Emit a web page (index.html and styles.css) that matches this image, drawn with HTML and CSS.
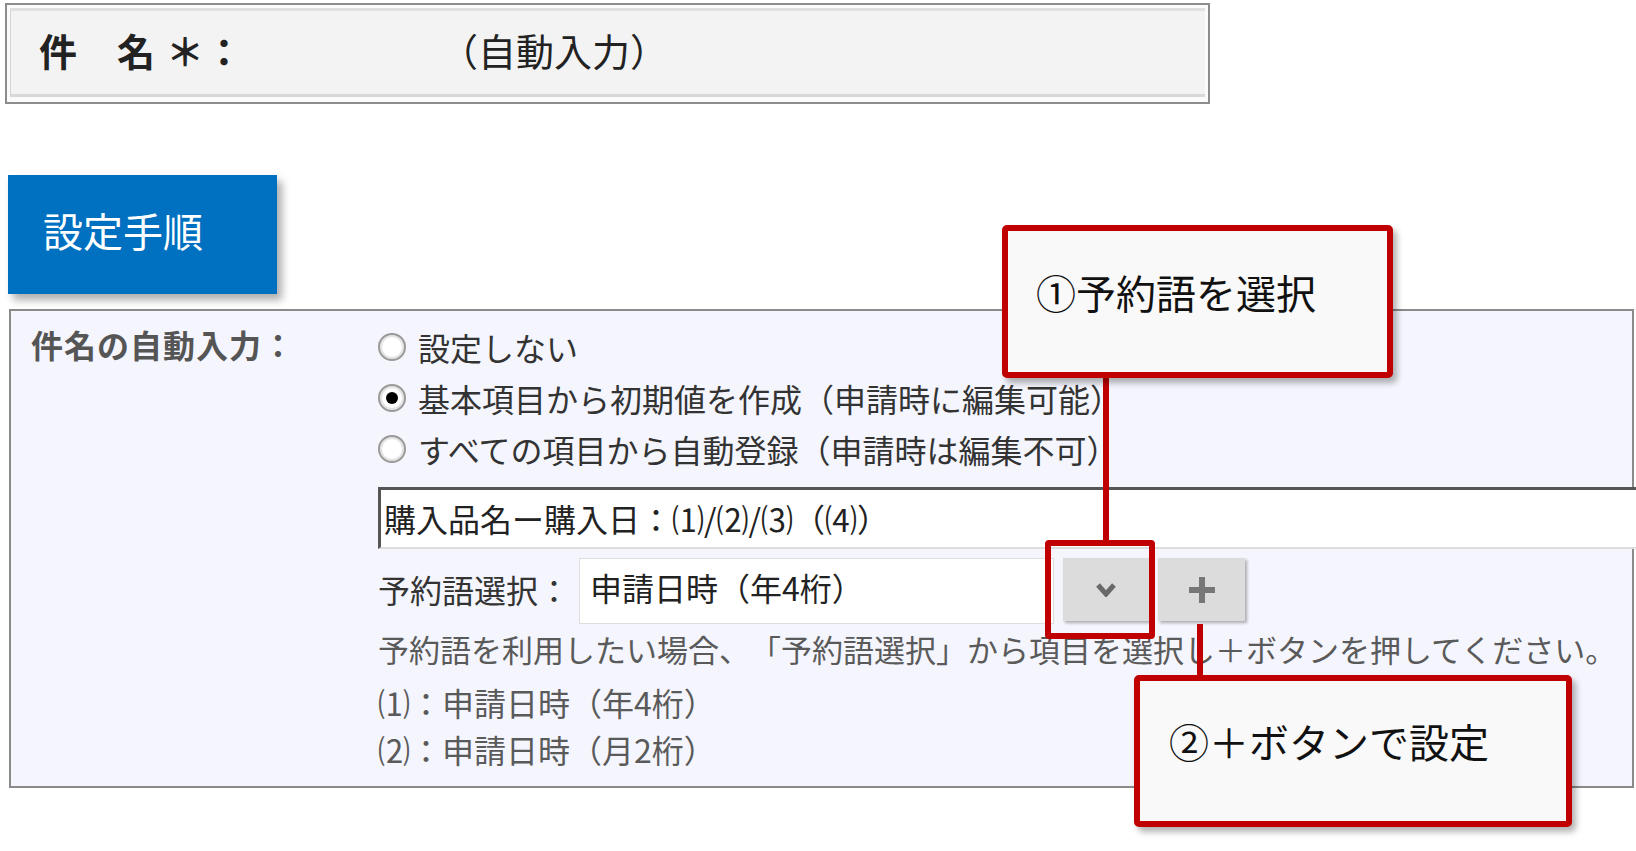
FILE: index.html
```html
<!DOCTYPE html>
<html lang="ja">
<head>
<meta charset="UTF-8">
<title>件名の自動入力 設定手順</title>
<link rel="stylesheet" href="styles.css">
</head>
<body>
<div class="sheet">

	<!-- 完成イメージ -->
	<div class="title-box">
		<div class="title-inner">
			<span class="title-label">件　名<span class="title-req">＊：</span></span>
			<span class="title-value">（自動入力）</span>
		</div>
	</div>

	<div class="step-tag">設定手順</div>

	<div class="panel">
		<div class="panel-label">件名の自動入力：</div>
		<div class="panel-body">
			<div class="radio-row"><span class="radio"></span>設定しない</div>
			<div class="radio-row"><span class="radio checked"></span>基本項目から初期値を作成（申請時に編集可能）</div>
			<div class="radio-row"><span class="radio"></span>すべての項目から自動登録（申請時は編集不可）</div>

			<div class="subject-input">購入品名ー購入日：⑴/⑵/⑶（⑷）</div>

			<div class="reserve-row">
				<span class="reserve-label">予約語選択：</span>
				<div class="reserve-select">申請日時（年4桁）</div>
				<button class="tool-btn">
					<svg width="20" height="14" viewBox="0 0 20 14"><path d="M2 2 L10 11 L18 2" fill="none" stroke="#6a6a6a" stroke-width="5"/></svg>
				</button>
				<button class="tool-btn plus">
					<svg width="26" height="26" viewBox="0 0 26 26"><rect x="0" y="10" width="26" height="6" fill="#777"/><rect x="10" y="0" width="6" height="26" fill="#777"/></svg>
				</button>
			</div>

			<p class="help">予約語を利用したい場合、「予約語選択」から項目を選択し＋ボタンを押してください。</p>
			<p class="note">⑴：申請日時（年4桁）</p>
			<p class="note">⑵：申請日時（月2桁）</p>
		</div>
	</div>

	<!-- 注釈 -->
	<div class="mark-box"></div>
	<div class="lead lead-1"></div>
	<div class="lead lead-2"></div>
	<div class="callout callout-1">①予約語を選択</div>
	<div class="callout callout-2">②＋ボタンで設定</div>

</div>
</body>
</html>
```

FILE: styles.css
```css
* {
	margin: 0;
	padding: 0;
	box-sizing: border-box;
}

body {
	background: #fff;
	font-family: "Noto Sans CJK JP", "Noto Sans", sans-serif;
	color: #222;
}

.sheet {
	position: relative;
	width: 1636px;
	height: 851px;
	overflow: hidden;
	padding-top: 3px;
}

/* 件名ボックス */
.title-box {
	margin-left: 5px;
	width: 1205px;
	height: 101px;
	border: 2px solid #8c8c8c;
	background: #fbfbfb;
	padding: 3px 3px 5px 3px;
}

.title-inner {
	height: 100%;
	display: flex;
	align-items: center;
	padding-left: 28px;
	padding-bottom: 6px;
	background: #f3f3f3;
	border-top: 3px solid #e0e0e0;
	border-bottom: 3px solid #d8d8d8;
	border-left: 1px solid #d4d4d4;
	font-size: 38px;
	line-height: 1;
}

.title-label {
	font-weight: bold;
	letter-spacing: 1px;
	width: 400px;
}

.title-req {
	margin-left: 10px;
}

.title-value {
	font-size: 38px;
	margin-left: 1px;
}

/* 見出し */
.step-tag {
	margin: 71px 0 0 8px;
	width: 269px;
	height: 119px;
	padding: 0 0 10px 35px;
	display: flex;
	align-items: center;
	background: #0070c0;
	color: #fff;
	font-size: 40px;
	box-shadow: 5px 6px 8px rgba(0, 0, 0, 0.32);
}

/* 設定パネル */
.panel {
	margin: 15px 0 0 9px;
	width: 1625px;
	height: 479px;
	border: 2px solid #8a8a8a;
	background: #f4f5fd;
	padding: 10px 0 0 20px;
	display: grid;
	grid-template-columns: 347px 1fr;
}

.panel-label {
	font-size: 32px;
	line-height: 46px;
	font-weight: bold;
	letter-spacing: 1px;
	color: #555;
}

.panel-body {
	font-size: 32px;
	color: #333;
}

.radio-row {
	height: 51px;
	display: flex;
	align-items: center;
	gap: 12px;
	white-space: nowrap;
}

.radio {
	position: relative;
	width: 28px;
	height: 28px;
	border-radius: 50%;
	border: 2px solid #9a9a9a;
	background: #fff;
	box-shadow: inset 0 0 0 2px #e4e4e4;
	flex: none;
}

.radio.checked::after {
	content: "";
	position: absolute;
	left: 6px;
	top: 6px;
	width: 12px;
	height: 12px;
	border-radius: 50%;
	background: #000;
}

.subject-input {
	margin-top: 13px;
	width: calc(100% + 4px);
	height: 62px;
	display: flex;
	align-items: center;
	padding-left: 3px;
	padding-bottom: 2px;
	background: #fff;
	border-top: 3px solid #555;
	border-left: 3px solid #555;
	border-bottom: 2px solid #ddd;
	color: #222;
	white-space: nowrap;
}

.reserve-row {
	margin-top: 9px;
	height: 66px;
	display: flex;
	align-items: flex-start;
}

.reserve-label {
	align-self: center;
	margin-right: 9px;
	margin-bottom: 4px;
	white-space: nowrap;
}

.reserve-select {
	width: 475px;
	height: 66px;
	display: flex;
	align-items: center;
	padding-left: 10px;
	padding-bottom: 8px;
	background: #fff;
	border: 1px solid #dedede;
	color: #222;
}

.tool-btn {
	margin-left: 9px;
	width: 86px;
	height: 63px;
	border: none;
	background: #dcdcdc;
	box-shadow: 2px 2px 3px rgba(0, 0, 0, 0.3);
	display: flex;
	align-items: center;
	justify-content: center;
}

.tool-btn.plus {
	width: 87px;
}

.help {
	margin-top: 1px;
	font-size: 31px;
	line-height: 48px;
	color: #5a5a5a;
	white-space: nowrap;
	text-spacing-trim: space-all;
}

.note {
	margin-top: 6px;
	line-height: 47px;
	color: #5a5a5a;
}

.note + .note {
	margin-top: 0;
}

/* 注釈 */
.mark-box {
	position: absolute;
	left: 1045px;
	top: 540px;
	width: 110px;
	height: 99px;
	border: 6px solid #c00000;
	border-radius: 4px;
}

.lead {
	position: absolute;
	width: 6px;
	background: #c00000;
}

.lead-1 {
	left: 1103px;
	top: 375px;
	height: 166px;
}

.lead-2 {
	left: 1197px;
	top: 624px;
	height: 53px;
}

.callout {
	position: absolute;
	border: 6px solid #c00000;
	border-radius: 5px;
	background: #f9f9f9;
	box-shadow: 4px 5px 6px rgba(0, 0, 0, 0.3);
	font-size: 40px;
	line-height: 48px;
	color: #111;
	white-space: nowrap;
}

.callout-1 {
	left: 1002px;
	top: 225px;
	width: 391px;
	height: 153px;
	padding: 37px 0 0 28px;
}

.callout-2 {
	left: 1134px;
	top: 675px;
	width: 438px;
	height: 152px;
	padding: 36px 0 0 29px;
}
```
